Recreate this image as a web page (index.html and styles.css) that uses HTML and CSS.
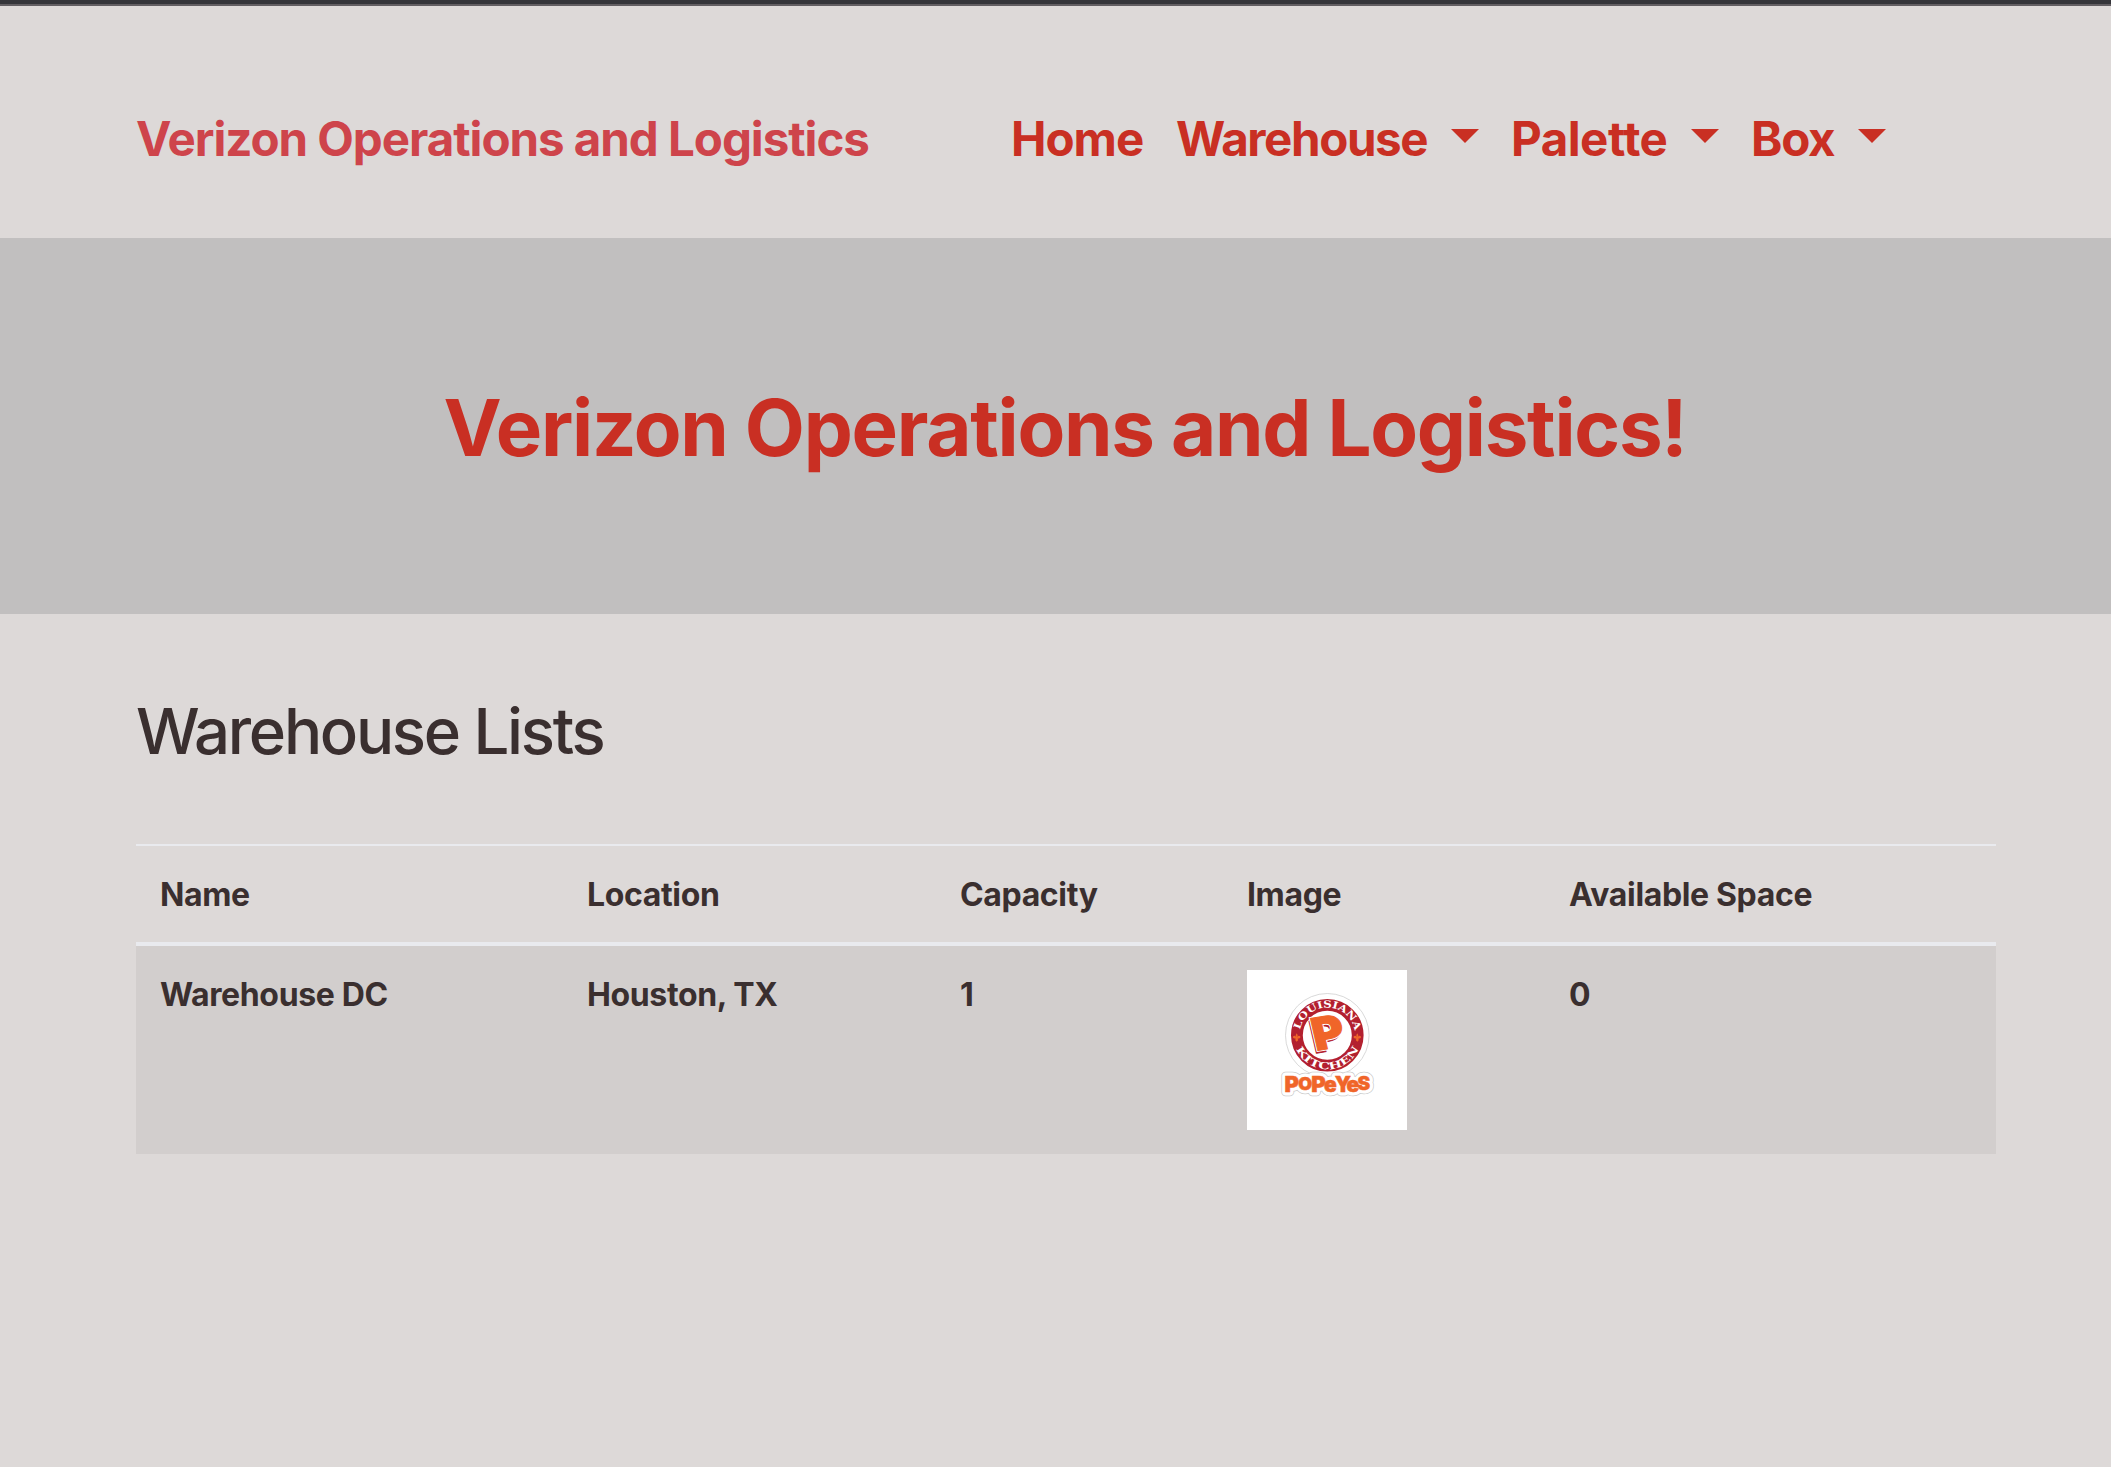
FILE: index.html
```html
<!DOCTYPE html>
<html lang="en">
<head>
<meta charset="utf-8">
<title>Verizon Operations and Logistics</title>
<link rel="stylesheet" href="styles.css">
</head>
<body>
<header class="navbar">
  <a class="brand"><span>Verizon Operations and Logistics</span></a>
  <nav class="nav">
    <a class="nav-link home">Home</a>
    <a class="nav-link warehouse">Warehouse<i class="caret"></i></a>
    <a class="nav-link palette">Palette<i class="caret"></i></a>
    <a class="nav-link box">Box<i class="caret"></i></a>
  </nav>
</header>
<section class="hero"><h1>Verizon Operations and Logistics!</h1></section>
<main class="content">
  <h2>Warehouse Lists</h2>
  <table class="table">
    <colgroup><col class="c-name"><col class="c-location"><col class="c-capacity"><col class="c-image"><col class="c-space"></colgroup>
    <thead>
      <tr><th>Name</th><th>Location</th><th>Capacity</th><th>Image</th><th>Available Space</th></tr>
    </thead>
    <tbody>
      <tr>
        <td>Warehouse DC</td><td>Houston, TX</td><td>1</td>
        <td class="image-cell">
          <svg class="logo" viewBox="0 0 160 160" width="160" height="160">
            <defs>
              <path id="arc-top" d="M52.5 65.3a27.8 27.8 0 0 1 55.6 0"/>
              <path id="arc-bottom" d="M46.3 65.3a34 34 0 0 0 68 0"/>
              <path id="lily" d="M0 -4.2q1.900 1.900.5 3.700q1.300-1.900 3-.7q.8 2-1.500 2.300l-1.200.2l.8 1.300l-1.600 1.700l-1.600-1.700l.8-1.300l-1.200-.2q-2.300-.3-1.500-2.300q1.700-1.200 3 .7q-1.400-1.800.5-3.700z"/>
              <text id="word" y="121.600"><tspan x="37.500" font-size="22">P</tspan><tspan x="51.300" dy="-1.500" font-size="18">O</tspan><tspan x="64.300" dy="1.500" font-size="22">P</tspan><tspan x="77" font-size="21">e</tspan><tspan x="87.800" font-size="21">Y</tspan><tspan x="99.500" font-size="21">e</tspan><tspan x="110.500" dy="-1.500" font-size="19">S</tspan></text>
            </defs>
            <rect width="160" height="160" fill="#fff"/>
            <circle cx="80.3" cy="65.3" r="41.8" fill="#fff" stroke="#c9c9c9" stroke-width=".7"/>
            <g class="wordmark">
              <use href="#word" class="word-edge"/>
              <use href="#word" class="word-gap"/>
              <use href="#word" class="word-fill"/>
            </g>
            <circle cx="80.3" cy="65.3" r="30.4" fill="none" stroke="#b3202f" stroke-width="11.8"/>
            <text class="ring"><textPath href="#arc-top" startOffset="5.5" textLength="77" lengthAdjust="spacingAndGlyphs">LOUISIANA</textPath></text>
            <text class="ring"><textPath href="#arc-bottom" startOffset="14" textLength="79" lengthAdjust="spacingAndGlyphs">KITCHEN</textPath></text>
            <use href="#lily" class="lily" x="49.700" y="67.500"/>
            <use href="#lily" class="lily" x="110.300" y="67.500"/>
            <g transform="translate(71 80.500) rotate(-9) skewX(4) scale(1.08 1)">
              <text class="big big-red" x="-4" y="2.500">P</text>
              <text class="big big-gap" x="-2" y="0">P</text>
              <text class="big big-orange" x="-2" y="0">P</text>
            </g>
          </svg>
        </td>
        <td>0</td>
      </tr>
    </tbody>
  </table>
</main>
</body>
</html>
```
FILE: styles.css
```css
* { box-sizing: border-box; }
body {
  margin: 0;
  min-height: 1467px;
  background: #ddd9d8;
  color: #3a2f2f;
  font-family: Inter, "Liberation Sans", sans-serif;
}
.navbar {
  display: flex;
  align-items: center;
  height: 238px;
  padding: 36px 136px 0;
  border-top: 4px solid #35353a;
  box-shadow: inset 0 2px 0 #625e62;
  font-size: 47.5px;
  font-weight: 700;
  line-height: 72px;
  white-space: nowrap;
}
.brand { width: 875px; color: #ce444b; letter-spacing: -1.04px; }
.nav { display: flex; color: #c92f23; letter-spacing: -1px; }
.nav-link { display: flex; align-items: center; }
.home { width: 165px; }
.warehouse { width: 335px; letter-spacing: -1.4px; }
.palette { width: 240px; letter-spacing: -.5px; }
.box { letter-spacing: -1.3px; }
.caret {
  margin-left: 24px;
  margin-top: -7px;
  border: 14.4px solid transparent;
  border-top-color: currentColor;
  border-bottom: 0;
}
.hero {
  display: flex;
  align-items: center;
  justify-content: center;
  height: 376px;
  padding: 4px 0 0 19px;
  background: #c1bfbf;
}
h1 {
  margin: 0;
  color: #c92f23;
  font-size: 78px;
  line-height: 96px;
  letter-spacing: -1.26px;
  white-space: nowrap;
}
.content { padding: 79px 115px 0 136px; }
h2 {
  margin: 0 0 75px;
  font-size: 63.5px;
  font-weight: 500;
  line-height: 76px;
  letter-spacing: -2.28px;
}
.table {
  width: 1860px;
  table-layout: fixed;
  border-collapse: separate;
  border-spacing: 0;
  font-size: 32px;
  font-weight: 700;
  line-height: 48px;
  letter-spacing: -.36px;
}
.c-name { width: 427px; }
.c-location { width: 373px; }
.c-capacity { width: 287px; }
.c-image { width: 322px; }
.c-space { width: 451px; }
th, td { padding: 25px 24px 23px; text-align: left; vertical-align: top; }
th { height: 102px; border-top: 2px solid #e9eaee; border-bottom: 4px solid #e9eaee; }
td { height: 208px; background: #d2cecd; }
.image-cell { padding: 24px; }
.logo { display: block; letter-spacing: 0; }
.ring { fill: #fff; font: 700 9.8px "DejaVu Serif", serif; }
.lily { fill: #f06529; }
.wordmark { font-family: Inter, sans-serif; font-weight: 900; }
.word-edge { fill: #c9c9c9; stroke: #c9c9c9; stroke-width: 8.4; stroke-linejoin: round; }
.word-gap { fill: #fff; stroke: #fff; stroke-width: 7; stroke-linejoin: round; }
.word-fill { fill: #f06529; stroke: #f06529; stroke-width: .5; }
.big { font: 900 45px Inter, sans-serif; }
.big-red { fill: #b3202f; stroke: #b3202f; stroke-width: 1; }
.big-gap { fill: #fff; stroke: #fff; stroke-width: 3; }
.big-orange { fill: #f06529; stroke: #f06529; stroke-width: 1; }
```
